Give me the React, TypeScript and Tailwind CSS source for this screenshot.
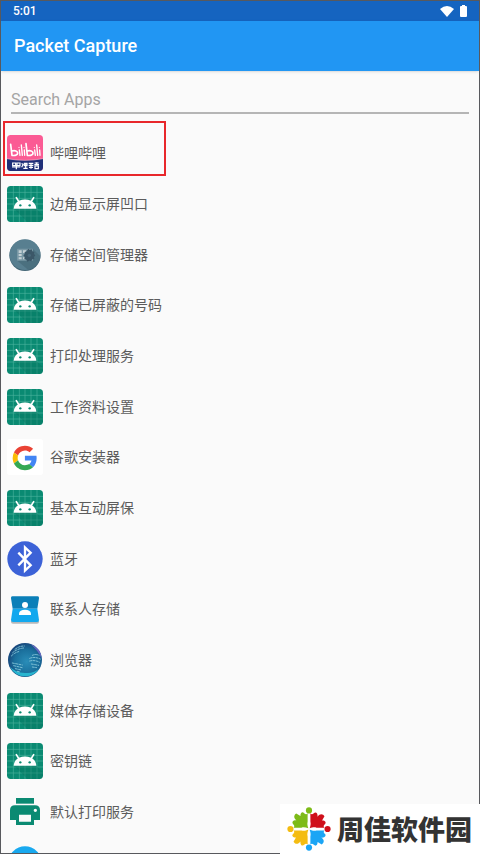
import type { ReactNode } from "react";

function AndroidIcon() {
  return (
    <svg viewBox="0 0 108 108" className="size-9" aria-hidden="true">
      <rect width="108" height="108" rx="11" fill="#0a8a72" />
      <path d="M19 0v108M37 0v108M54 0v108M72 0v108M90 0v108M0 19h108M0 37h108M0 54h108M0 72h108M0 90h108" stroke="#4db39f" strokeWidth="1.8" />
      <path d="M88 68l20 20v9a11 11 0 0 1-11 11H61L21 68z" fill="#05705c" opacity=".35" />
      <path d="M28 35l10 16M80 35l-10 16" fill="none" stroke="#fff" strokeWidth="5" strokeLinecap="round" />
      <path d="M20 68C21 55 28 48 36 44q18-7 36 0c8 4 15 11 16 24z" fill="#fff" />
      <circle cx="40" cy="58" r="3.5" fill="#0a8a72" />
      <circle cx="68" cy="58" r="3.5" fill="#0a8a72" />
    </svg>
  );
}

function BilibiliIcon() {
  return (
    <svg viewBox="0 0 108 108" className="size-9" aria-hidden="true">
      <rect width="108" height="108" rx="11" fill="#fb5b94" />
      <path d="M0 71q54 10 108 0v26a11 11 0 0 1-11 11H11A11 11 0 0 1 0 97z" fill="#1f2f78" />
      <path d="M0 71q54 10 108 0" fill="none" stroke="#f5b5c8" strokeWidth="2" />
      <g fill="none" stroke="#fff" strokeWidth="5" strokeLinecap="round" strokeLinejoin="round">
        <path d="M11 28l4 33c11 2 17-2 17-7s-8-9-17-6M57 26l4 35c11 2 17-2 17-7s-8-9-17-6" />
        <path d="M37 45l2 16M43 30l3 31M52 45l1 16M83 45l2 16M89 30l3 31M98 45l1 16" strokeWidth="4" />
        <path d="M36 37v1M51 37v1M82 37v1M97 37v1" strokeWidth="3" />
      </g>
      <g fill="none" stroke="#fff" strokeWidth="3.6">
        <path d="M17 84h9v8h-9zM30 84h9v8h-9zM15 96h25M28 90v13" />
        <path d="M44 85l4 4-4 8M52 85h8v7h-8zM56 84v16M49 100h13" />
        <path d="M65 85h14M72 83v18M65 91h14M66 97h12" />
        <path d="M83 84h12M89 82v6M82 89h14M84 93h10v8H84z" />
      </g>
    </svg>
  );
}

function StorageIcon() {
  return (
    <svg viewBox="0 0 108 108" className="size-9" aria-hidden="true">
      <circle cx="54" cy="55" r="47" fill="#426575" />
      <circle cx="54" cy="53" r="46" fill="#587f90" />
      <path d="M78 36l22 22c0 18-17 38-37 40L31 71z" fill="#426575" opacity=".6" />
      <rect x="30" y="35" width="48" height="36" rx="2" fill="#7998a5" />
      <path d="M35 40h9v8h-9zM35 51h9v6h-9zM35 61h9v6h-9zM48 40h9v8h-9zM48 61h9v6h-9z" fill="#c5d1d6" />
      <path d="M64 35l4 4 6-2 2 6 6 2-1 6 4 4-4 5 1 6-6 1-3 6-6-2-6 3-3-6-6-2 1-6-4-5 4-4 0-6 6-2z" fill="#3b5768" />
      <circle cx="67" cy="55" r="5" fill="#49687a" />
    </svg>
  );
}

function GoogleIcon() {
  return (
    <svg viewBox="0 0 108 108" className="size-9" aria-hidden="true">
      <rect width="108" height="108" rx="8" fill="#fff" />
      <g transform="translate(17 20) scale(1.53)">
        <path fill="#ea4335" d="M24 9.5c3.54 0 6.71 1.22 9.21 3.6l6.85-6.85C35.9 2.38 30.47 0 24 0 14.62 0 6.51 5.38 2.56 13.22l7.98 6.19C12.43 13.72 17.74 9.5 24 9.5z" />
        <path fill="#4285f4" d="M46.98 24.55c0-1.57-.15-3.09-.38-4.55H24v9.02h12.94c-.58 2.96-2.26 5.48-4.78 7.18l7.73 6c4.51-4.18 7.09-10.36 7.09-17.65z" />
        <path fill="#fbbc05" d="M10.53 28.59A14.5 14.5 0 0 1 9.77 24c0-1.6.27-3.14.76-4.59l-7.98-6.19A24 24 0 0 0 0 24c0 3.88.92 7.54 2.56 10.78z" />
        <path fill="#34a853" d="M24 48c6.48 0 11.93-2.13 15.89-5.81l-7.73-6c-2.15 1.45-4.92 2.3-8.16 2.3-6.26 0-11.57-4.22-13.47-9.91l-7.98 6.19C6.51 42.62 14.62 48 24 48z" />
      </g>
    </svg>
  );
}

function BluetoothIcon() {
  return (
    <svg viewBox="0 0 108 108" className="size-9" aria-hidden="true">
      <circle cx="54" cy="54" r="53" fill="#3c62d7" />
      <path d="M34 35l37 38-17 16V19l17 16-37 38" fill="none" stroke="#fff" strokeWidth="7" strokeLinejoin="miter" />
    </svg>
  );
}

function ContactsIcon() {
  return (
    <svg viewBox="0 0 108 108" className="size-9" aria-hidden="true">
      <path d="M12 89h84v3q0 6-6 6H18q-6 0-6-6z" fill="#b5b8ba" />
      <path d="M16 16h76q5 0 4 6l-5 31H17l-5-31q-1-6 4-6z" fill="#0b7fb8" />
      <path d="M17 53h74l5 34q0 6-6 6H18q-6 0-6-6z" fill="#12a8ee" />
      <circle cx="54" cy="42" r="9" fill="#fff" />
      <path d="M36 72v-5q2-11 18-11t18 11v5z" fill="#fff" />
    </svg>
  );
}

function BrowserIcon() {
  return (
    <svg viewBox="0 0 108 108" className="size-9" aria-hidden="true">
      <defs>
        <radialGradient id="globe" cx=".55" cy=".55" r=".6">
          <stop offset="0" stopColor="#2a8db8" />
          <stop offset=".6" stopColor="#1a6f9c" />
          <stop offset="1" stopColor="#173f75" />
        </radialGradient>
      </defs>
      <circle cx="54" cy="54" r="51" fill="url(#globe)" />
      <path d="M70 6q32 12 34 44-10-24-34-44z" fill="#6967c4" />
      <path d="M8 73q16 31 48 30 26 0 41-24-14 16-43 14Q25 93 8 73z" fill="#28b5cf" />
      <g fill="none" stroke="#8bcbdc" strokeWidth="2.6" strokeLinecap="round" strokeDasharray="6 4">
        <path d="M24 22q12-10 28-10M17 32q14-12 33-14M13 42q12-12 26-14" />
        <path d="M16 63l30 6M20 71l26 6M25 80l18 4M31 88l9 2" />
        <path d="M76 40q10-5 20 0M68 49q14-6 32 2M68 57q15-4 30 4M73 66l22 4M76 75l13 2" />
      </g>
    </svg>
  );
}

function PrinterIcon() {
  return (
    <svg viewBox="0 0 108 108" className="size-9" aria-hidden="true">
      <path d="M27 12h54v17H27z" fill="#0a8a72" />
      <path fillRule="evenodd" d="M24 34h60q15 0 15 15v29H81v15H27V78H9V49q0-15 15-15zm12 28v21h36V62zm49-18a5 5 0 1 0 0 10 5 5 0 0 0 0-10z" fill="#0a8a72" />
    </svg>
  );
}

function DownloadIcon() {
  return (
    <svg viewBox="0 0 108 108" className="size-9" aria-hidden="true">
      <circle cx="54" cy="54" r="50" fill="#19a9ef" />
      <path d="M54 36v34M39 56l15 15 15-15" fill="none" stroke="#fff" strokeWidth="7" />
    </svg>
  );
}

const apps: { name: string; icon: ReactNode; marked?: boolean }[] = [
  { name: "哔哩哔哩", icon: <BilibiliIcon />, marked: true },
  { name: "边角显示屏凹口", icon: <AndroidIcon /> },
  { name: "存储空间管理器", icon: <StorageIcon /> },
  { name: "存储已屏蔽的号码", icon: <AndroidIcon /> },
  { name: "打印处理服务", icon: <AndroidIcon /> },
  { name: "工作资料设置", icon: <AndroidIcon /> },
  { name: "谷歌安装器", icon: <GoogleIcon /> },
  { name: "基本互动屏保", icon: <AndroidIcon /> },
  { name: "蓝牙", icon: <BluetoothIcon /> },
  { name: "联系人存储", icon: <ContactsIcon /> },
  { name: "浏览器", icon: <BrowserIcon /> },
  { name: "媒体存储设备", icon: <AndroidIcon /> },
  { name: "密钥链", icon: <AndroidIcon /> },
  { name: "默认打印服务", icon: <PrinterIcon /> },
  { name: "", icon: <DownloadIcon /> },
];

function Petal({ color, turn }: { color: string; turn: number }) {
  return (
    <path
      d="M62 62C60 55 58 50 60 42V19C56 23 53 21 50 18C45 13 39 16 39 26L27 19C20 23 18 32 28 39C17 38 13 45 18 50C21 53 23 56 19 60H42C50 58 55 60 62 62z"
      fill={color}
      transform={`rotate(${turn} 64 64)`}
    />
  );
}

function Watermark() {
  return (
    <div className="absolute right-0 bottom-0 flex h-[50px] w-[200px] items-center gap-1.5 bg-white pl-[7px]">
      <svg viewBox="0 0 128 128" className="size-11 shrink-0" aria-hidden="true">
        <Petal color="#7dbb18" turn={0} />
        <Petal color="#cf101b" turn={90} />
        <Petal color="#1ba5f5" turn={180} />
        <Petal color="#f4bc12" turn={270} />
        <circle cx="64" cy="10" r="9" fill="#7dbb18" />
        <circle cx="118" cy="64" r="9" fill="#cf101b" />
        <circle cx="64" cy="118" r="9" fill="#1ba5f5" />
        <circle cx="10" cy="64" r="9" fill="#f4bc12" />
      </svg>
      <span className="font-['Noto_Sans_CJK_SC',sans-serif] text-[27px] leading-9 font-black whitespace-nowrap text-[#333333]">周佳软件园</span>
    </div>
  );
}

export default function App() {
  return (
    <div className="relative h-screen">
      <div className="flex h-full flex-col overflow-hidden border border-[#58595d] bg-[#fafafa] font-[Roboto,'Noto_Sans_CJK_SC',sans-serif]">
        <div className="flex h-5 shrink-0 items-center justify-between bg-[#1564c0] px-3 text-white">
          <span className="text-xs font-medium">5:01</span>
          <div className="flex items-center gap-1.5">
            <svg viewBox="0 0 14 12" className="h-3 w-3.5" role="img" aria-label="Wi-Fi">
              <path d="M0 4Q7-2 14 4L7 12z" fill="currentColor" />
            </svg>
            <svg viewBox="0 0 7 12" className="h-3 w-[7px]" role="img" aria-label="Battery">
              <path d="M2 0h3v1h1q1 0 1 1v9q0 1-1 1H1q-1 0-1-1V2q0-1 1-1h1z" fill="currentColor" />
            </svg>
          </div>
        </div>
        <header className="flex h-[50px] shrink-0 items-center bg-[#2196f3] px-[13px] shadow-sm">
          <h1 className="text-lg font-medium text-white">Packet Capture</h1>
        </header>
        <div className="shrink-0 px-2.5 pt-[15px] pb-3.5">
          <input
            type="text"
            aria-label="Search Apps"
            placeholder="Search Apps"
            className="block h-7 w-full border-b-2 border-[#b5b5b5] bg-transparent text-base text-[#555555] outline-none placeholder:text-[#a5a5a5]"
          />
        </div>
        <ul className="-mb-[35px] grid min-h-0 flex-1 auto-rows-fr">
          {apps.map((app, i) => (
            <li key={i} className="relative flex min-h-0 items-center gap-[7px] pl-1.5">
              <span className="shrink-0">{app.icon}</span>
              <span className="text-sm text-[#5c5c5c]">{app.name}</span>
              {app.marked && <span className="absolute -top-[7px] left-0.5 h-[55px] w-[163px] border-2 border-[#e8272b]" />}
            </li>
          ))}
        </ul>
      </div>
      <Watermark />
    </div>
  );
}
